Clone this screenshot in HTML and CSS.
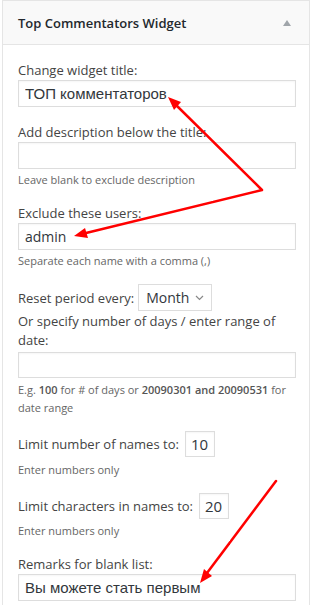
FILE: index.html
```html
<!DOCTYPE html>
<html lang="en">
<head>
    <meta charset="UTF-8">
    <title>Top Commentators Widget</title>
    <link rel="stylesheet" href="styles.css">
</head>
<body>
    <div class="widget">
        <div class="widget-top">
            <h3>Top Commentators Widget</h3>
            <span class="toggle"></span>
        </div>

        <div class="widget-inside">
            <div class="field first">
                <label>Change widget title:</label>
                <input class="text-input cyr" type="text" value="ТОП комментаторов">
            </div>

            <div class="field">
                <label>Add description below the title:</label>
                <input class="text-input" type="text" value="">
                <p class="desc">Leave blank to exclude description</p>
            </div>

            <div class="field">
                <label>Exclude these users:</label>
                <input class="text-input" type="text" value="admin">
                <p class="desc">Separate each name with a comma (,)</p>
            </div>

            <div class="field">
                <div class="inline-row">
                    <label>Reset period every:</label>
                    <div class="select">
                        <span>Month</span>
                        <svg width="9" height="6" viewBox="0 0 9 6"><path d="M1 1 L4.5 4.5 L8 1" fill="none" stroke="#888" stroke-width="1.2"/></svg>
                    </div>
                </div>
                <label class="multi">Or specify number of days / enter range of date:</label>
                <input class="text-input short" type="text" value="">
                <p class="desc loose">E.g. <b>100</b> for # of days or <b>20090301 and 20090531</b> for date range</p>
            </div>

            <div class="field">
                <div class="inline-row">
                    <label>Limit number of names to:</label>
                    <input class="num-input" type="text" value="10">
                </div>
                <p class="desc loose-2">Enter numbers only</p>
            </div>

            <div class="field">
                <div class="inline-row">
                    <label>Limit characters in names to:</label>
                    <input class="num-input" type="text" value="20">
                </div>
                <p class="desc loose">Enter numbers only</p>
            </div>

            <div class="field">
                <label>Remarks for blank list:</label>
                <input class="text-input cyr" type="text" value="Вы можете стать первым">
            </div>
        </div>
    </div>
    <div class="page-bottom"></div>

    <!-- red annotation arrows drawn over the form -->
    <svg class="arrows" width="311" height="605" viewBox="0 0 311 605">
        <g stroke="#ff0000" stroke-width="2.5" fill="none" stroke-linecap="round" stroke-linejoin="round">
            <polyline points="176,105 262,190 86,233"/>
            <line x1="276" y1="481" x2="207" y2="573"/>
        </g>
        <g fill="#ff0000">
            <polygon points="168,97 181,102 174,110"/>
            <polygon points="74,236 88,238 85,228"/>
            <polygon points="200,583 212,576 204,569"/>
        </g>
    </svg>
</body>
</html>
```

FILE: styles.css
```css
* {
    box-sizing: border-box;
}

body {
    margin: 0;
    background: #fff;
    font-family: 'Open Sans', sans-serif;
    font-size: 13px;
    color: #444;
    position: relative;
    overflow: hidden;
}

.widget {
    margin-left: 2px;
    width: 308px;
    border: 1px solid #e5e5e5;
    border-bottom: none;
    background: #fff;
}

.widget-top {
    height: 44px;
    padding: 0 18px 0 15px;
    background: #f9f9f9;
    border-bottom: 1px solid #e5e5e5;
    display: flex;
    align-items: center;
    justify-content: space-between;
}

.widget-top h3 {
    margin: 0;
    font-size: 13px;
    font-weight: 600;
    color: #23282d;
}

.toggle {
    width: 0;
    height: 0;
    border-left: 4px solid transparent;
    border-right: 4px solid transparent;
    border-bottom: 6px solid #a0a5aa;
}

.widget-inside {
    padding: 15px 13px 2px 15px;
}

.field {
    margin-bottom: 14px;
}

.field.first {
    margin-bottom: 15px;
}

.field label {
    display: block;
    line-height: 20px;
}

.field label.multi {
    line-height: 19px;
    margin-top: 1px;
}

.text-input,
.num-input {
    font-family: 'Open Sans', sans-serif;
    font-size: 14px;
    color: #32373c;
    border: 1px solid #ddd;
    background: #fff;
    margin: 0;
    outline: none;
    box-shadow: inset 0 1px 2px rgba(0, 0, 0, 0.04);
}

.text-input {
    display: block;
    width: 100%;
    height: 27px;
    padding: 0 6px;
}

.text-input.cyr {
    font-family: 'Liberation Sans', Arial, sans-serif;
    font-size: 15px;
}

.text-input.short {
    height: 26px;
    margin-top: 2px;
}

.num-input {
    width: 30px;
    height: 26px;
    padding: 0 5px;
    margin-left: 6px;
    font-size: 15px;
}

.desc {
    margin: 2px 0 0;
    font-size: 11px;
    line-height: 18px;
    color: #666;
}

.desc b {
    font-weight: 600;
    color: #555;
}

.desc.loose {
    margin-top: 3px;
}

.desc.loose-2 {
    margin-top: 4px;
}

.inline-row {
    display: flex;
    align-items: center;
}

.select {
    height: 27px;
    width: 74px;
    margin-left: 4px;
    border: 1px solid #ddd;
    display: flex;
    align-items: center;
    justify-content: space-between;
    padding: 0 7px 0 7px;
    font-size: 14px;
    color: #32373c;
}

.page-bottom {
    height: 10px;
    background: #eef2f6;
}

.arrows {
    position: absolute;
    top: 0;
    left: 0;
    pointer-events: none;
}
```
